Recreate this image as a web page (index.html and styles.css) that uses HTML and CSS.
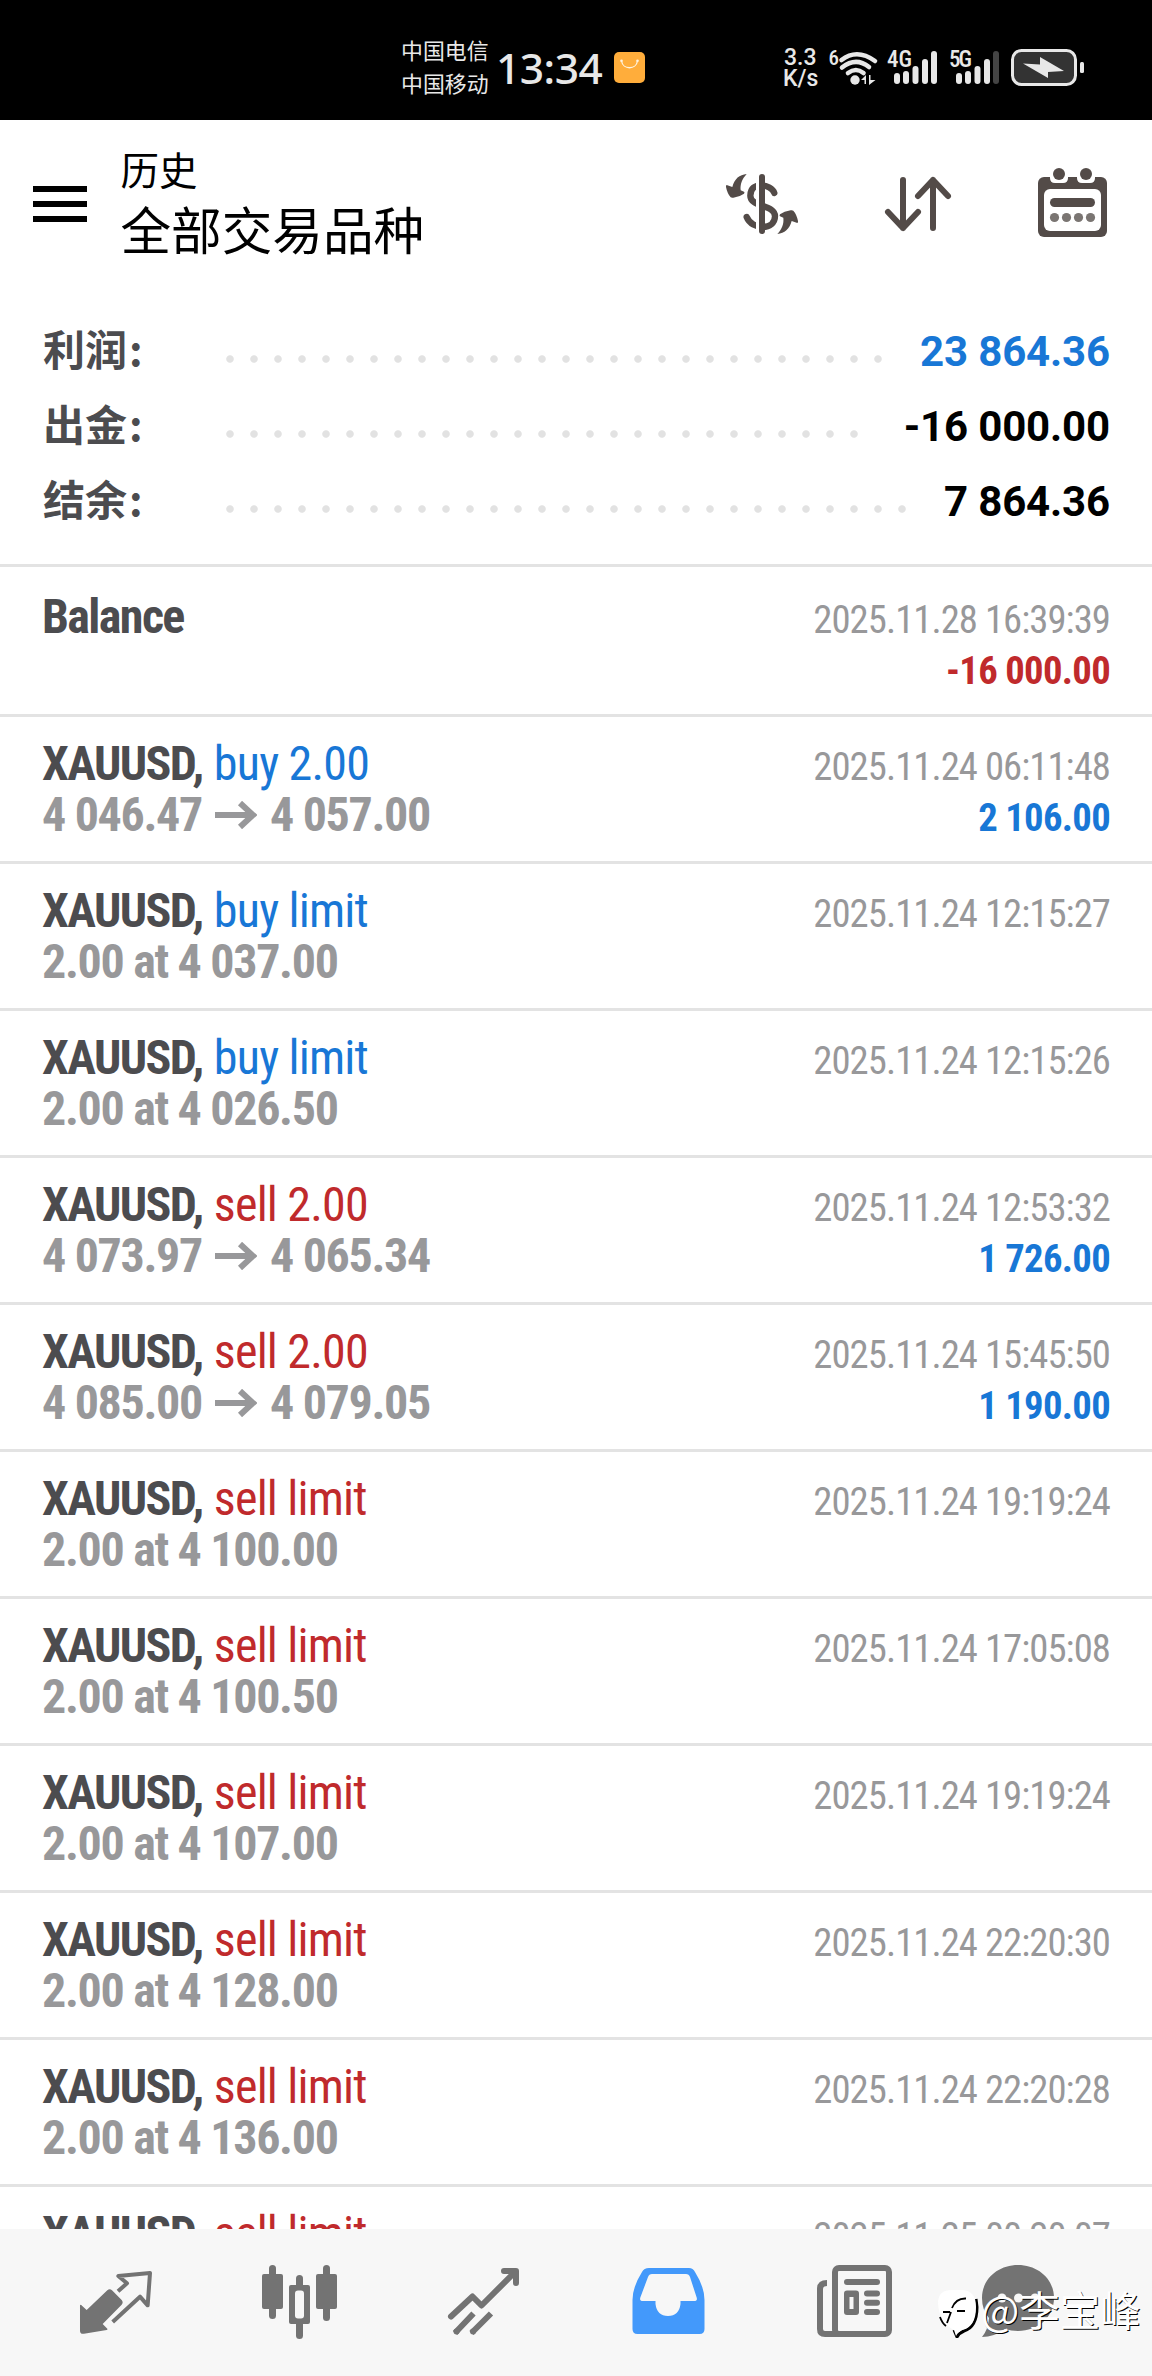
FILE: index.html
```html
<!DOCTYPE html>
<html lang="zh-CN">
<head>
<meta charset="utf-8">
<title>历史</title>
<link rel="stylesheet" href="styles.css">
</head>
<body>
<div class="status">
  <div class="carriers"><span>中国电信</span><span>中国移动</span></div>
  <div class="clock">13:34</div>
  <svg class="bag" width="31" height="31" viewBox="0 0 31 31"><rect width="31" height="31" rx="5" fill="#ffad3b"/><path d="M7.500 9C9 18 22 18 23.500 9" fill="none" stroke="#fff3df" stroke-width="1.300"/><circle cx="7.500" cy="8.800" r="1.300" fill="#fff3df"/><circle cx="23.500" cy="8.800" r="1.300" fill="#fff3df"/></svg>
  <div class="speed"><span>3.3</span><span>K/s</span></div>
  <svg class="signals" width="260" height="50" viewBox="826 42 260 50">
    <g fill="#e8e8e8">
      <text x="828.500" y="65" font-size="21" textLength="10">6</text>
      <g fill="none" stroke="#e8e8e8" stroke-width="4.600" stroke-linecap="round">
        <path d="M841.500 60Q857 48 875 61"/><path d="M842 67.500Q856 56.500 869 67"/><path d="M848 73Q856 67 863.500 73"/>
      </g>
      <circle cx="855" cy="80" r="4.700"/>
      <path d="M861 80l5-5v9h-1.500v-4zM869 75h1.500v5h5l-6.500 5z"/>
      <text x="887" y="67" font-size="23" textLength="25">4G</text>
      <rect x="894" y="73" width="6" height="11" rx="3"/><rect x="903" y="71" width="6" height="13" rx="3"/><rect x="912.500" y="66" width="6" height="18" rx="3"/><rect x="922" y="59" width="6" height="25" rx="3"/><rect x="931" y="51" width="6" height="33" rx="3"/>
      <text x="949" y="67" font-size="23" textLength="23">5G</text>
      <rect x="956" y="73" width="6" height="11" rx="3"/><rect x="965" y="71" width="6" height="13" rx="3"/><rect x="974.500" y="66" width="6" height="18" rx="3"/><rect x="984" y="59" width="6" height="25" rx="3"/><rect x="993" y="51" width="6" height="33" rx="3" fill="#444"/>
      <rect x="1012.500" y="50.500" width="63" height="34" rx="9" fill="#333" stroke="#e8e8e8" stroke-width="3"/>
      <rect x="1080" y="62" width="4" height="11" rx="1.500"/>
      <path d="M1023 63.500L1040 64.500V57L1064 71L1048 72V78z"/>
    </g>
  </svg>
</div>

<header class="header">
  <div class="menu"><i></i><i></i><i></i></div>
  <div class="titles"><div class="sub">历史</div><div class="title">全部交易品种</div></div>
  <svg class="dollar" width="90" height="80" viewBox="0 0 270 240">
    <path d="M163 84C154 58 91 46 91 92C91 127 165 118 165 154C165 196 96 196 80 156" fill="none" stroke="#534b48" stroke-width="19" stroke-linecap="round"/>
    <path d="M113 20V215" stroke="#fff" stroke-width="10"/>
    <path d="M126 36V198" stroke="#534b48" stroke-width="18" stroke-linecap="round"/>
    <path id="swap" fill="#534b48" d="M80 27C58 29 44 41 37 66L20 60Q17 61 18 66Q22 86 32 97Q35 99 40 98Q60 95 72 86Q75 82 72 80L62 76C60 58 66 42 80 27z"/>
    <use href="#swap" transform="rotate(180 126 117)"/>
  </svg>
  <svg class="sort" width="72" height="60" viewBox="882 174 72 60" fill="none" stroke="#534b48" stroke-width="6" stroke-linecap="round" stroke-linejoin="round"><path d="M903 180V228M888 212L903 228L918 212M933 228V180M918 196L933 180L948 196"/></svg>
  <svg class="calendar" width="69" height="70" viewBox="1038 168 69 70">
    <rect x="1038" y="177" width="69" height="60" rx="6" fill="#534b48"/>
    <rect x="1044" y="189" width="57" height="42" rx="6" fill="#fff"/>
    <path d="M1050 170h18v8q0 5-5 5h-8q-5 0-5-5zM1077 170h18v8q0 5-5 5h-8q-5 0-5-5z" fill="#fff"/>
    <g fill="#534b48"><circle cx="1059" cy="174" r="6"/><circle cx="1086" cy="174" r="6"/><rect x="1050" y="198" width="45" height="9" rx="4.500"/></g>
    <g fill="#7a7572"><circle cx="1054.500" cy="217.500" r="4.600"/><circle cx="1066.500" cy="217.500" r="4.600"/><circle cx="1078.500" cy="217.500" r="4.600"/><circle cx="1090.500" cy="217.500" r="4.600"/></g>
  </svg>
</header>

<section class="summary">
  <div class="sum"><span class="label">利润<i>:</i></span><span class="dots"></span><span class="value blue">23 864.36</span></div>
  <div class="sum"><span class="label">出金<i>:</i></span><span class="dots"></span><span class="value">-16 000.00</span></div>
  <div class="sum"><span class="label">结余<i>:</i></span><span class="dots"></span><span class="value">7 864.36</span></div>
</section>

<main class="list">
  <div class="row balance"><div class="l"><div><b>Balance</b></div></div><div class="r"><div>2025.11.28 16:39:39</div><div class="amt red">-16 000.00</div></div></div>
  <div class="row"><div class="l"><div><b>XAUUSD,</b> <span class="blue">buy 2.00</span></div><div class="price">4 046.47<svg class="arrow" viewBox="0 0 42 28"><path d="M0 14H37M25 2L38 14L25 26"/></svg>4 057.00</div></div><div class="r"><div>2025.11.24 06:11:48</div><div class="amt blue">2 106.00</div></div></div>
  <div class="row"><div class="l"><div><b>XAUUSD,</b> <span class="blue">buy limit</span></div><div class="price">2.00 at 4 037.00</div></div><div class="r"><div>2025.11.24 12:15:27</div></div></div>
  <div class="row"><div class="l"><div><b>XAUUSD,</b> <span class="blue">buy limit</span></div><div class="price">2.00 at 4 026.50</div></div><div class="r"><div>2025.11.24 12:15:26</div></div></div>
  <div class="row"><div class="l"><div><b>XAUUSD,</b> <span class="red">sell 2.00</span></div><div class="price">4 073.97<svg class="arrow" viewBox="0 0 42 28"><path d="M0 14H37M25 2L38 14L25 26"/></svg>4 065.34</div></div><div class="r"><div>2025.11.24 12:53:32</div><div class="amt blue">1 726.00</div></div></div>
  <div class="row"><div class="l"><div><b>XAUUSD,</b> <span class="red">sell 2.00</span></div><div class="price">4 085.00<svg class="arrow" viewBox="0 0 42 28"><path d="M0 14H37M25 2L38 14L25 26"/></svg>4 079.05</div></div><div class="r"><div>2025.11.24 15:45:50</div><div class="amt blue">1 190.00</div></div></div>
  <div class="row"><div class="l"><div><b>XAUUSD,</b> <span class="red">sell limit</span></div><div class="price">2.00 at 4 100.00</div></div><div class="r"><div>2025.11.24 19:19:24</div></div></div>
  <div class="row"><div class="l"><div><b>XAUUSD,</b> <span class="red">sell limit</span></div><div class="price">2.00 at 4 100.50</div></div><div class="r"><div>2025.11.24 17:05:08</div></div></div>
  <div class="row"><div class="l"><div><b>XAUUSD,</b> <span class="red">sell limit</span></div><div class="price">2.00 at 4 107.00</div></div><div class="r"><div>2025.11.24 19:19:24</div></div></div>
  <div class="row"><div class="l"><div><b>XAUUSD,</b> <span class="red">sell limit</span></div><div class="price">2.00 at 4 128.00</div></div><div class="r"><div>2025.11.24 22:20:30</div></div></div>
  <div class="row"><div class="l"><div><b>XAUUSD,</b> <span class="red">sell limit</span></div><div class="price">2.00 at 4 136.00</div></div><div class="r"><div>2025.11.24 22:20:28</div></div></div>
  <div class="row"><div class="l"><div><b>XAUUSD,</b> <span class="red">sell limit</span></div></div><div class="r"><div>2025.11.25 00:20:07</div></div></div>
</main>

<nav class="nav">
  <svg viewBox="24 2229 184 147"><g transform="translate(60 2250) scale(.33333)"><path fill="#737373" d="M60 166Q62 162 66 167L80 180L142 121Q149 114 156 121L185 150Q191 157 185 164L128 222L142 236Q144 239 140 240L72 251Q60 253 60 242z"/><path fill="none" stroke="#737373" stroke-width="12" d="M174 124L201 100L175 78L270 69L263 166L240 140L158 216" stroke-linejoin="round"/></g></svg>
  <svg viewBox="208 2229 184 147"><g fill="#737373"><rect x="262" y="2274" width="21" height="35" rx="2"/><rect x="269" y="2265" width="7" height="54" rx="3.500"/><rect x="316" y="2274" width="21" height="35" rx="2"/><rect x="323" y="2265" width="7" height="56" rx="3.500"/><rect x="289" y="2285" width="21" height="39" rx="2"/><rect x="296" y="2275" width="7" height="64" rx="3.500"/></g><rect x="295" y="2290.500" width="9" height="28" rx="3" fill="#f7f7f7"/></svg>
  <svg viewBox="392 2229 184 147"><g fill="none" stroke="#737373" stroke-width="6" stroke-linejoin="round"><path stroke-linecap="round" d="M451 2316.500L472.500 2296.500L481.500 2305.500L515 2272M504 2271H516V2283"/><path d="M455 2333L473.500 2313.500M471.500 2333L491 2313.500"/></g><g fill="#737373"><circle cx="456.500" cy="2331.500" r="3"/><circle cx="473" cy="2331.500" r="3"/></g></svg>
  <svg viewBox="576 2229 184 147"><path fill="#4399fb" fill-rule="evenodd" d="M649 2268H689Q693 2268 695 2272Q704.500 2287 704.500 2300V2329Q704.500 2334 699.500 2334H637.500Q632.500 2334 632.500 2329V2300Q632.500 2287 642 2272Q644 2268 649 2268zM652 2274Q649 2274 648 2277L640.500 2297Q639 2301 643 2301H655.500V2304Q657 2316 668 2316Q679 2316 680.500 2304V2301H694Q698 2301 696.500 2297L690 2277Q689 2274 686 2274z"/></svg>
  <svg viewBox="760 2229 184 147"><g fill="none" stroke="#737373" stroke-width="6"><rect x="835" y="2268" width="54" height="66" rx="4"/><path d="M827 2283Q820 2283 820 2289V2329Q820 2334 825 2334H840"/></g><g fill="#737373"><rect x="844" y="2279" width="36" height="6" rx="3"/><rect x="864" y="2290.500" width="16" height="6" rx="3"/><rect x="864" y="2299.700" width="16" height="6" rx="3"/><rect x="864" y="2309" width="16" height="6" rx="3"/><rect x="844" y="2290.500" width="15" height="24.500" rx="3"/></g><rect x="849.500" y="2297" width="4" height="12" fill="#f7f7f7"/></svg>
  <svg viewBox="944 2229 184 147"><path fill="#737373" d="M1018 2265C1038 2265 1054 2279 1054 2298S1038 2331 1018 2331Q1011 2331 1005 2329Q994 2337 982 2337Q988 2330 989 2318Q982 2310 982 2298C982 2279 998 2265 1018 2265z"/><g fill="#f7f7f7"><circle cx="1002" cy="2298" r="4.500"/><circle cx="1018.500" cy="2298" r="4.500"/><circle cx="1035" cy="2298" r="4.500"/></g></svg>
  <div class="mark">
    <svg width="44" height="52" viewBox="935 2287 44 52"><path d="M954 2331L957 2338Q959 2334 964 2332Q977 2328 977 2308L976 2300" fill="none" stroke="#000" stroke-width="3"/><path fill="#fff" d="M938 2304Q938 2291 952 2291H961Q976 2291 976 2308Q976 2328 962 2331Q958 2333 956 2337L954 2331Q939 2324 938 2304z"/><path d="M947 2324L951 2313M952 2309Q956 2299 966 2299.500M943 2313H950M957 2312H965M940 2318Q942 2324 946 2327" fill="none" stroke="#000" stroke-width="1.800"/></svg>
    <span>@李宝峰</span>
  </div>
</nav>
</body>
</html>
```
FILE: styles.css
```css
* { box-sizing: border-box; }
body { margin: 0; width: 1152px; height: 2376px; overflow: hidden; display: flex; flex-direction: column; background: #fff; color: #000; font-family: Roboto, "Noto Sans CJK SC", sans-serif; }
svg { display: block; flex: none; }

.status { height: 120px; flex: none; display: flex; align-items: center; padding: 14px 0 0 401px; background: #000; color: #e8e8e8; }
.carriers { display: flex; flex-direction: column; width: 95px; margin-top: -3px; font: 21.9px/33px "Noto Sans CJK SC", sans-serif; white-space: nowrap; }
.clock { width: 118px; margin-top: 2px; font: 500 42.500px/50px "Noto Sans", sans-serif; letter-spacing: -0.5px; }
.speed { margin-left: 138px; width: 43px; margin-top: 2px; display: flex; flex-direction: column; font: 500 23px/21px Roboto, sans-serif; }
.speed span:first-child { padding-left: 1px; }
.signals { font-family: Roboto, sans-serif; font-stretch: 75%; font-weight: 500; }

.header { height: 160px; flex: none; display: flex; align-items: center; padding: 0 45px 0 33px; }
.menu { display: flex; flex-direction: column; gap: 9px; width: 54px; margin-top: 8px; }
.menu i { height: 6px; background: #000; }
.titles { flex: 1; margin-left: 33.500px; font-family: "Noto Sans CJK SC", sans-serif; }
.sub { font-size: 38.500px; line-height: 50px; margin-bottom: 5px; }
.title { font-size: 50.600px; line-height: 60px; }
.dollar { margin-right: 72px; margin-top: 10px; }
.sort { margin-top: 8px; margin-right: 84px; }
.calendar { margin-top: 6px; }

.summary { flex: none; height: 287px; padding: 34px 42px 0 43px; border-bottom: 3px solid #e3e3e3; }
.sum { display: flex; height: 75px; }
.label { width: 175px; font: 700 42px/68px "Noto Sans CJK SC", sans-serif; color: #4c4c4f; }
.label i { font-style: normal; margin-left: 2px; }
.dots { flex: 1; height: 75px; margin-right: 32px; background: radial-gradient(circle at 12px 45px, #e2e2e2 3.300px, transparent 4.200px) 0 0 / 24px 75px repeat-x; }
.value { font-size: 42px; line-height: 75px; font-weight: 700; letter-spacing: -0.150px; }

.blue { color: #1877d6; }
.red { color: #c02a2c; }

.list { flex: 1; min-height: 0; overflow: hidden; }
.row { display: flex; justify-content: space-between; height: 147px; padding: 21px 42px 0 42px; border-bottom: 3px solid #e3e3e3; font-size: 48px; line-height: 51px; font-stretch: 75%; letter-spacing: -0.800px; white-space: nowrap; }
.balance { height: 150px; padding-top: 24px; }
.row b { margin-right: 1px; font-weight: 700; color: #4c4c4f; letter-spacing: -1.600px; }
.price { display: flex; color: #98989a; font-weight: 700; letter-spacing: -1.320px; }
.arrow { width: 42px; height: 28px; margin: 12px 13px 0; fill: none; stroke: #98989a; stroke-width: 6px; }
.r { padding-top: 3px; font-size: 38.700px; letter-spacing: -0.950px; text-align: right; color: #98989a; }
.amt { font-weight: 700; letter-spacing: -0.700px; }
.amt.blue { color: #1877d6; }
.amt.red { color: #c02a2c; }

.nav { position: relative; flex: none; height: 147px; display: flex; padding: 0 24px; background: #f7f7f7; }
.nav > svg { width: 184px; height: 147px; }
.mark { position: absolute; left: 935px; top: 54px; display: flex; align-items: center; color: #fff; font: 40.500px/52px "Noto Sans CJK SC", sans-serif; text-shadow: 1px 1px 0 #000; }
.mark span { margin: 0 0 5px 2px; }
```
